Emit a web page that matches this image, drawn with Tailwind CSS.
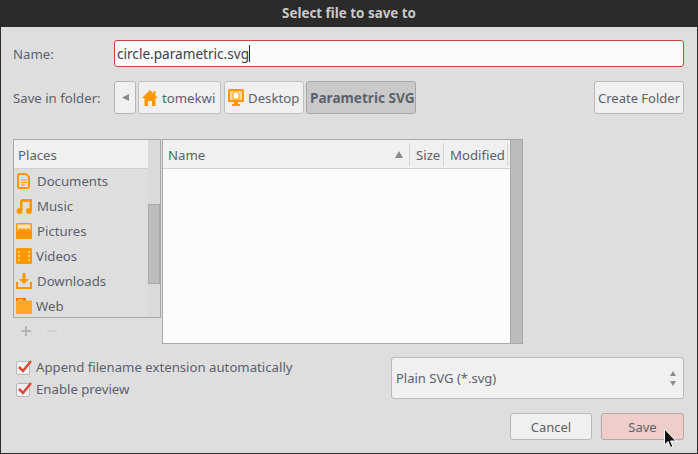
<!DOCTYPE html>
<html lang="en">
  <head>
    <meta charset="UTF-8" />
    <title>Select file to save to</title>
    <script src="https://cdn.jsdelivr.net/npm/@tailwindcss/browser@4"></script>
  </head>
  <body class="bg-[#dedede] font-['Noto_Sans',sans-serif] text-[13.2px] text-[#5c616c] overflow-hidden">
    <div class="relative w-[698px] h-[454px] flex flex-col border-x border-b border-[#2b2b2b]">
      <!-- title bar -->
      <div class="h-[27px] shrink-0 bg-[#2b2b2b] text-[#c9c9c9] text-[13.4px] font-bold flex items-center justify-center">Select file to save to</div>

      <!-- name -->
      <div class="flex items-center mt-[13px] h-[27px] pl-3 pr-[13px]">
        <span class="w-[101px] pt-[2px]">Name:</span>
        <div class="flex-1 h-[27px] bg-[#fafafa] border border-[#c9453a] rounded-[3px] flex items-center pl-[2px] text-[#3b3f48] text-[13.6px]">
          <span class="pt-[2px]">circle.parametric.svg</span><span class="w-px h-[17px] bg-[#2b2b2b]"></span>
        </div>
      </div>

      <!-- path bar -->
      <div class="flex items-center mt-[14px] h-[33px] pl-3 pr-[13px]">
        <span class="w-[101px] pt-[2px]">Save in folder:</span>
        <div class="w-[22px] h-[33px] bg-[#f0f0f0] border border-[#b5b5b5] rounded-[3px] flex items-center justify-center">
          <svg width="7" height="7" viewBox="0 0 7 7"><path d="M7 0v7L0 3.500z" fill="#8a8a8a" /></svg>
        </div>
        <div class="ml-[2px] w-[83px] h-[33px] bg-[#f0f0f0] border border-[#c0c0c0] rounded-[3px] flex items-center gap-[4px] pl-[3px]">
          <svg width="16" height="16" viewBox="0 0 16 16"><path d="M8 0 0 8h2.500v8H6v-5h4v5h3.500V8H16l-2.500-2.500V1h-2v2.500z" fill="#ff9800" /></svg>
          <span class="pt-[2px]">tomekwi</span>
        </div>
        <div class="ml-[3px] w-[80px] h-[33px] bg-[#f0f0f0] border border-[#c0c0c0] rounded-[3px] flex items-center gap-[4px] pl-[3px]">
          <svg width="16" height="17" viewBox="0 0 16 17"><path d="M1.500 0h13A1.500 1.500 0 0 1 16 1.500v10a1.500 1.500 0 0 1-1.500 1.500H10v2h2v2H4v-2h2v-2H1.500A1.500 1.500 0 0 1 0 11.500v-10A1.500 1.500 0 0 1 1.500 0z" fill="#ff9800" /><path d="M2 2h12v9H2z" fill="#ffd9a0" /><path d="M5 3h4l2 2v5H5z" fill="#fff" stroke="#ff9800" /></svg>
          <span class="pt-[2px]">Desktop</span>
        </div>
        <div class="ml-[2px] w-[110px] h-[33px] bg-[#c9c9c9] border border-[#a8a8a8] rounded-[3px] flex items-center pl-[3px] font-bold text-[13.6px] whitespace-nowrap"><span class="pt-[2px]">Parametric SVG</span></div>
        <div class="ml-auto w-[90px] h-[33px] bg-[#f0f0f0] border border-[#b9b9b9] rounded-[3px] flex items-center justify-center whitespace-nowrap text-[13px]"><span class="pt-[2px]">Create Folder</span></div>
      </div>

      <!-- places and file list -->
      <div class="flex mt-[25px] pl-3 pr-[13px] h-[205px]">
        <div class="w-[148px] flex flex-col">
          <div class="h-[179px] border border-[#a8a8a8] flex overflow-hidden">
            <div class="flex-1 min-w-0">
              <div class="h-[29px] bg-[#f0f0f0] border-b border-[#d0d0d0] flex items-center pl-1"><span class="pt-[4px]">Places</span></div>
              <div class="h-[25px] -mt-px flex items-center gap-[5px] pl-[2px]">
                <svg width="16" height="16" viewBox="0 0 16 16"><path d="M3 1h7l3 3v10a1 1 0 0 1-1 1H3a1 1 0 0 1-1-1V2a1 1 0 0 1 1-1z" fill="none" stroke="#ff9800" stroke-width="2" /><path d="M5 7h6M5 9.500h6M5 12h4" stroke="#ff9800" /></svg>
                <span class="pt-[2px]">Documents</span>
              </div>
              <div class="h-[25px] flex items-center gap-[5px] pl-[2px]">
                <svg width="16" height="16" viewBox="0 0 16 16"><path d="M4 3.500a2.500 2.500 0 0 1 2.500-2.500H16v11.500h-2.500V4H6.500v8.500H4z" fill="#ff9800" /><circle cx="3.500" cy="13" r="3" fill="#ff9800" /><circle cx="13" cy="13" r="3" fill="#ff9800" /></svg>
                <span class="pt-[2px]">Music</span>
              </div>
              <div class="h-[25px] flex items-center gap-[5px] pl-[2px]">
                <svg width="16" height="16" viewBox="0 0 16 16"><rect width="16" height="16" rx="1.500" fill="#ff9800" /><path d="M1.500 8 4 4.500 6 6.500 8 5l2 2 2-2.500 2.500 3V1.500h-13z" fill="#ffe2b8" /></svg>
                <span class="pt-[2px]">Pictures</span>
              </div>
              <div class="h-[25px] flex items-center gap-[4px] pl-[2px]">
                <svg width="16" height="16" viewBox="0 0 16 16"><rect width="16" height="16" rx="1.500" fill="#ff9800" /><path d="M2 3h1.500v2H2zM2 7h1.500v2H2zM2 11h1.500v2H2zM12.500 3H14v2h-1.500zM12.500 7H14v2h-1.500zM12.500 11H14v2h-1.500z" fill="#ffe2b8" /></svg>
                <span class="pt-[2px]">Videos</span>
              </div>
              <div class="h-[25px] flex items-center gap-[5px] pl-[2px]">
                <svg width="16" height="16" viewBox="0 0 16 16"><path d="M6.500 0h3v6H13l-5 5-5-5h3.500z" fill="#ff9800" /><path d="M0 9h2v5h12V9h2v7H0z" fill="#ff9800" /></svg>
                <span class="pt-[2px]">Downloads</span>
              </div>
              <div class="h-[25px] flex items-center gap-[4px] pl-[2px]">
                <svg width="16" height="16" viewBox="0 0 16 16"><path d="M0 0h10v3H0z" fill="#e8710a" /><path d="M2 1.500h5v1H2z" fill="#fff" /><path d="M0 2.500h16V16H0z" fill="#ffa726" /></svg>
                <span class="pt-[2px]">Web</span>
              </div>
            </div>
            <div class="w-[12px] shrink-0 bg-[#dadada] pt-[64px]">
              <div class="h-[80px] bg-[#bcbcbc] border border-[#a8a8a8]"></div>
            </div>
          </div>
          <div class="flex items-center gap-[16px] pl-[8px] mt-[8px]">
            <svg width="10" height="10" viewBox="0 0 10 10"><path d="M4 0h2v4h4v2H6v4H4V6H0V4h4z" fill="#b5b5b5" /></svg>
            <svg width="10" height="10" viewBox="0 0 10 10"><path d="M0 4h10v2H0z" fill="#d0d0d0" /></svg>
          </div>
        </div>

        <div class="ml-px w-[361px] border border-[#a8a8a8] flex bg-[#fcfcfc]">
          <div class="flex-1 min-w-0">
            <div class="h-[29px] bg-[#f0f0f0] border-b border-[#d0d0d0] flex items-center">
              <span class="w-[247px] pl-[5px] flex items-center justify-between pr-[6px] h-[23px] border-r border-[#d4d4d4]"><span class="pt-[4px]">Name</span>
                <svg width="8" height="7" viewBox="0 0 8 7"><path d="M4 0 8 7H0z" fill="#8a8a8a" /></svg>
              </span>
              <span class="w-[34px] h-[23px] flex items-center pl-[6px] border-r border-[#d4d4d4]"><span class="pt-[4px]">Size</span></span>
              <span class="w-[64px] h-[23px] flex items-center pl-[6px] border-r border-[#d4d4d4]"><span class="pt-[4px]">Modified</span></span>
            </div>
          </div>
          <div class="w-[12px] shrink-0 bg-[#bcbcbc] border-l border-[#a8a8a8]"></div>
        </div>
      </div>

      <!-- options -->
      <div class="flex mt-[13px] pl-3 pr-[13px] h-[42px]">
        <div class="w-[378px] flex flex-col gap-[6px] pt-[3px]">
          <label class="flex items-center gap-[6px] h-[16px] pl-[3px]">
            <span class="relative w-[14px] h-[14px] bg-[#f0f0f0] border border-[#b9b9b9] rounded-[2px]">
              <svg class="absolute -top-[3px] left-0" width="16" height="15" viewBox="0 0 16 15"><path d="M2 8l4 4 8-10" fill="none" stroke="#d9483b" stroke-width="2.500" /></svg>
            </span>
            <span>Append filename extension automatically</span>
          </label>
          <label class="flex items-center gap-[6px] h-[16px] pl-[3px]">
            <span class="relative w-[14px] h-[14px] bg-[#f0f0f0] border border-[#b9b9b9] rounded-[2px]">
              <svg class="absolute -top-[3px] left-0" width="16" height="15" viewBox="0 0 16 15"><path d="M2 8l4 4 8-10" fill="none" stroke="#d9483b" stroke-width="2.500" /></svg>
            </span>
            <span>Enable preview</span>
          </label>
        </div>
        <div class="w-[293px] bg-[#f0f0f0] border border-[#b9b9b9] rounded-[3px] flex items-center justify-between pl-[4px] pr-[7px] text-[13px]">
          <span class="pt-[2px]">Plain SVG (*.svg)</span>
          <svg width="6" height="15" viewBox="0 0 6 15"><path d="M3 0l3 5H0zM3 15l3-5H0z" fill="#8a8a8a" /></svg>
        </div>
      </div>

      <!-- buttons -->
      <div class="flex justify-end gap-[9px] mt-[14px] pr-[13px] text-[13px]">
        <button class="w-[82px] h-[27px] bg-[#f0f0f0] border border-[#b9b9b9] rounded-[3px] pt-[2px]">Cancel</button>
        <button class="w-[83px] h-[27px] bg-[#eecdca] border border-[#b9a5a3] rounded-[3px] pt-[2px]">Save</button>
      </div>

      <!-- mouse cursor -->
      <svg class="absolute left-[662px] top-[428px]" width="14" height="21" viewBox="0 0 14 21"><path d="M1.500 1v16l3.500-3.500 2.500 6 2.500-1-2.500-5.500h5.500z" fill="#111" stroke="#fff" /></svg>
    </div>
  </body>
</html>
